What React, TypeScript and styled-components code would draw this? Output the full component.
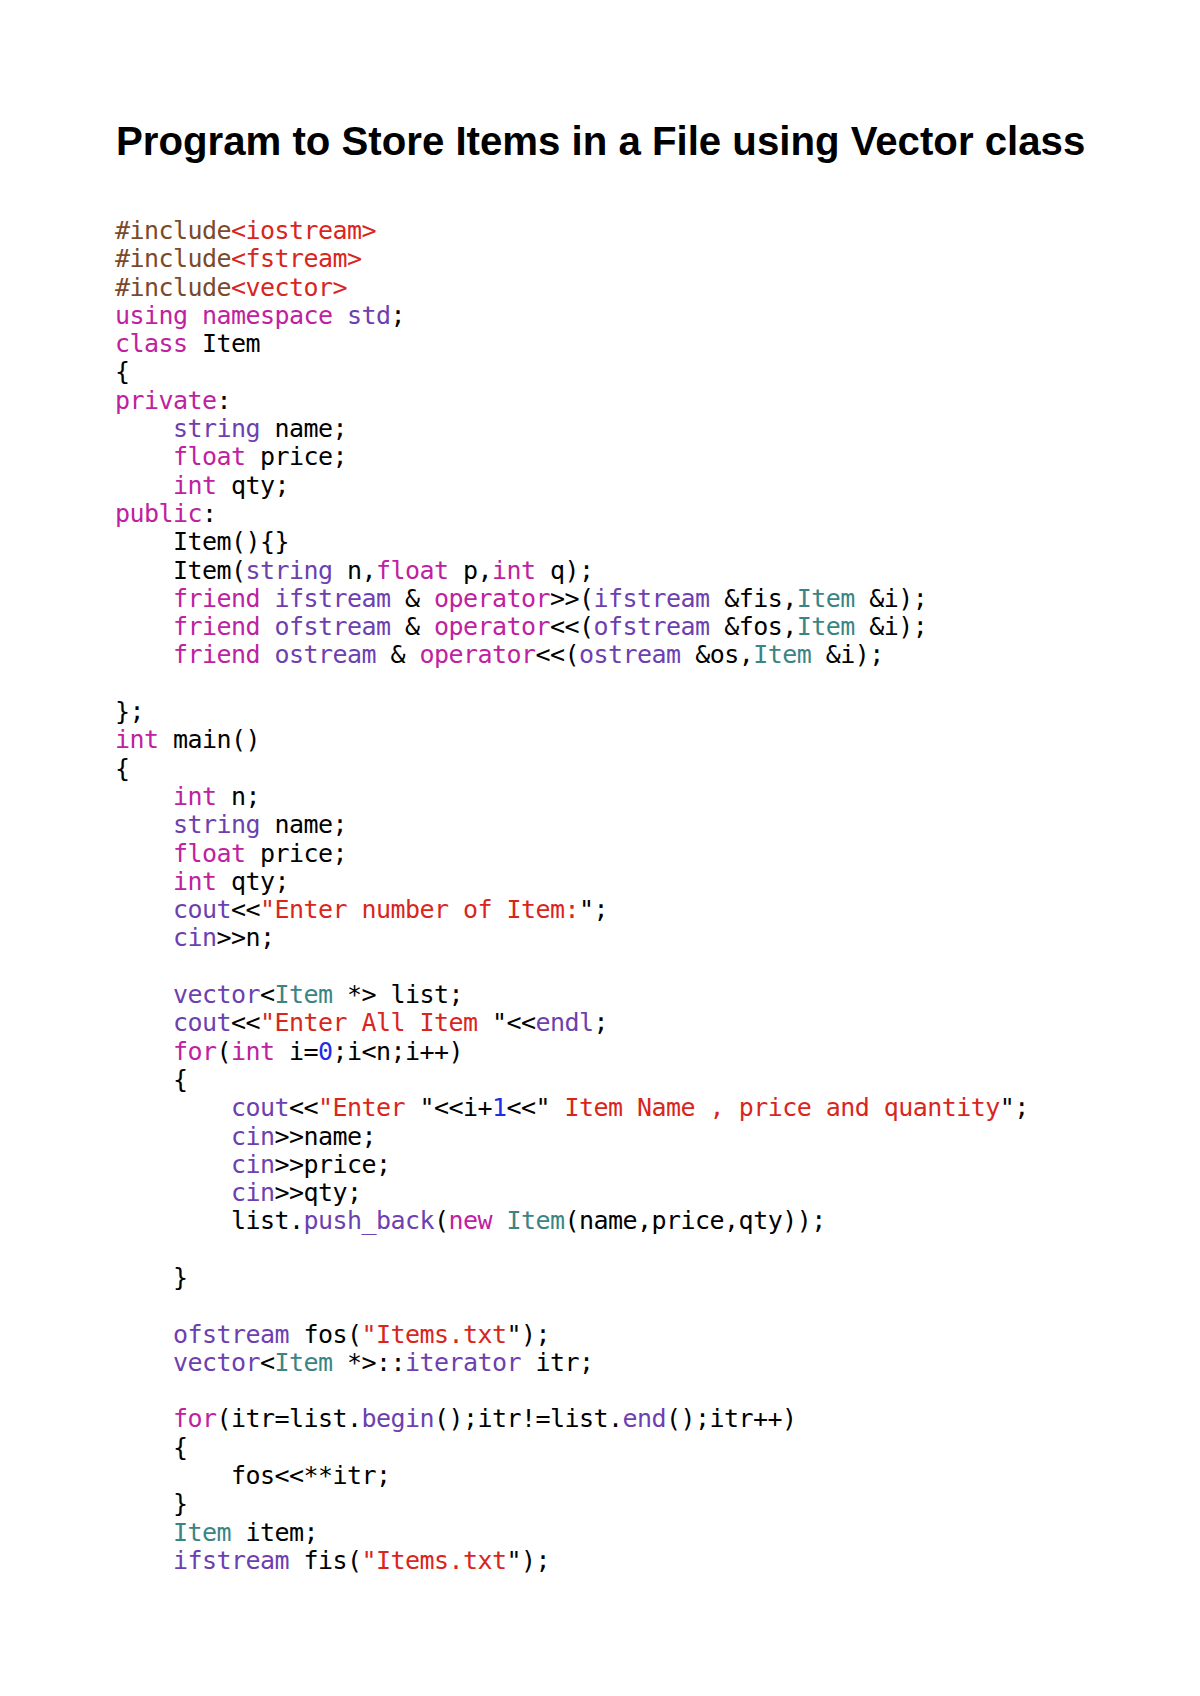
import React from "react";
import styled, { createGlobalStyle } from "styled-components";

const GlobalStyle = createGlobalStyle`
  html, body {
    margin: 0;
    padding: 0;
    background: #ffffff;
  }
`;

type Kind = "plain" | "pp" | "str" | "kw" | "lib" | "type" | "num";

const colors: Record<Kind, string> = {
  plain: "#000000",
  pp: "#7a4a2b",
  str: "#d8261d",
  kw: "#c021a0",
  lib: "#6d3fb0",
  type: "#3a8584",
  num: "#1d2ce6",
};

const Page = styled.div`
  width: 1200px;
  min-height: 1696px;
  box-sizing: border-box;
  padding: 119px 0 0 115px;
  background: #ffffff;
`;

const Title = styled.h1`
  margin: 0 0 52px 1px;
  font-family: "Liberation Sans", Arial, sans-serif;
  font-weight: 700;
  font-size: 40.2px;
  line-height: 46px;
  color: #000000;
  letter-spacing: 0;
`;

const Code = styled.pre`
  margin: 0;
  font-family: "DejaVu Sans Mono", "Liberation Mono", monospace;
  font-size: 25px;
  letter-spacing: -0.55px;
  line-height: 28.3px;
  color: #000000;
`;

const Line = styled.div`
  height: 28.3px;
  white-space: pre;
`;

const Tok = styled.span<{ $kind: Kind }>`
  color: ${(p) => colors[p.$kind]};
`;

type T = [Kind, string];
const P = (s: string): T => ["plain", s];
const K = (s: string): T => ["kw", s];
const L = (s: string): T => ["lib", s];
const S = (s: string): T => ["str", s];
const Y = (s: string): T => ["type", s];
const N = (s: string): T => ["num", s];
const PP = (s: string): T => ["pp", s];

const I1 = "    ";
const I2 = "        ";

const lines: T[][] = [
  [PP("#include"), S("<iostream>")],
  [PP("#include"), S("<fstream>")],
  [PP("#include"), S("<vector>")],
  [K("using"), P(" "), K("namespace"), P(" "), L("std"), P(";")],
  [K("class"), P(" Item")],
  [P("{")],
  [K("private"), P(":")],
  [P(I1), L("string"), P(" name;")],
  [P(I1), K("float"), P(" price;")],
  [P(I1), K("int"), P(" qty;")],
  [K("public"), P(":")],
  [P(I1 + "Item(){}")],
  [P(I1 + "Item("), L("string"), P(" n,"), K("float"), P(" p,"), K("int"), P(" q);")],
  [P(I1), K("friend"), P(" "), L("ifstream"), P(" & "), K("operator"), P(">>("), L("ifstream"), P(" &fis,"), Y("Item"), P(" &i);")],
  [P(I1), K("friend"), P(" "), L("ofstream"), P(" & "), K("operator"), P("<<("), L("ofstream"), P(" &fos,"), Y("Item"), P(" &i);")],
  [P(I1), K("friend"), P(" "), L("ostream"), P(" & "), K("operator"), P("<<("), L("ostream"), P(" &os,"), Y("Item"), P(" &i);")],
  [],
  [P("};")],
  [K("int"), P(" main()")],
  [P("{")],
  [P(I1), K("int"), P(" n;")],
  [P(I1), L("string"), P(" name;")],
  [P(I1), K("float"), P(" price;")],
  [P(I1), K("int"), P(" qty;")],
  [P(I1), L("cout"), P("<<"), S("\"Enter number of Item:"), P("\";")],
  [P(I1), L("cin"), P(">>n;")],
  [],
  [P(I1), L("vector"), P("<"), Y("Item"), P(" *> list;")],
  [P(I1), L("cout"), P("<<"), S("\"Enter All Item "), P("\"<<"), L("endl"), P(";")],
  [P(I1), K("for"), P("("), K("int"), P(" i="), N("0"), P(";i<n;i++)")],
  [P(I1 + "{")],
  [P(I2), L("cout"), P("<<"), S("\"Enter "), P("\"<<i+"), N("1"), P("<<\""), S(" Item Name , price and quantity"), P("\";")],
  [P(I2), L("cin"), P(">>name;")],
  [P(I2), L("cin"), P(">>price;")],
  [P(I2), L("cin"), P(">>qty;")],
  [P(I2 + "list."), L("push_back"), P("("), K("new"), P(" "), Y("Item"), P("(name,price,qty));")],
  [],
  [P(I1 + "}")],
  [],
  [P(I1), L("ofstream"), P(" fos("), S("\"Items.txt"), P("\");")],
  [P(I1), L("vector"), P("<"), Y("Item"), P(" *>::"), L("iterator"), P(" itr;")],
  [],
  [P(I1), K("for"), P("(itr=list."), L("begin"), P("();itr!=list."), L("end"), P("();itr++)")],
  [P(I1 + "{")],
  [P(I2 + "fos<<**itr;")],
  [P(I1 + "}")],
  [P(I1), Y("Item"), P(" item;")],
  [P(I1), L("ifstream"), P(" fis("), S("\"Items.txt"), P("\");")],
];

export default function App() {
  return (
    <>
      <GlobalStyle />
      <Page>
        <Title>Program to Store Items in a File using Vector class</Title>
        <Code>
          {lines.map((toks, i) => (
            <Line key={i}>
              {toks.length === 0
                ? " "
                : toks.map(([k, s], j) => (
                    <Tok key={j} $kind={k}>
                      {s}
                    </Tok>
                  ))}
            </Line>
          ))}
        </Code>
      </Page>
    </>
  );
}
